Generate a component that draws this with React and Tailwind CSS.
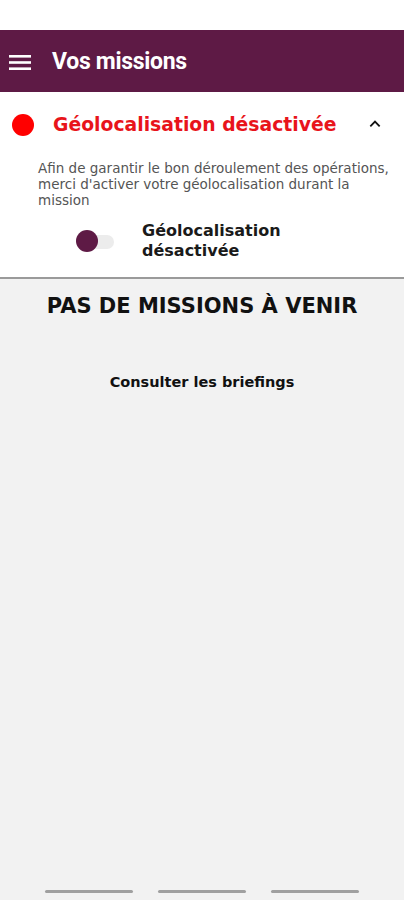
import React, { useState } from "react";

const body = { fontFamily: '"DejaVu Sans", "Open Sans", sans-serif' };

function App() {
    const [expanded, setExpanded] = useState(true);
    const [geoOn, setGeoOn] = useState(false);

    return (
        <div className="w-[404px] h-[900px] flex flex-col bg-[#f2f2f2] overflow-hidden" style={body}>
            {/* status bar */}
            <div className="h-[30px] bg-white shrink-0" />

            {/* app bar */}
            <div className="h-[62px] shrink-0 bg-[#5e1a45] flex items-center pl-[9px] pt-[2px] gap-[21px]">
                <svg width="22" height="15" viewBox="0 0 22 15" className="text-white">
                    <rect x="0" y="0" width="22" height="2.6" fill="currentColor" />
                    <rect x="0" y="6.2" width="22" height="2.6" fill="currentColor" />
                    <rect x="0" y="12.4" width="22" height="2.6" fill="currentColor" />
                </svg>
                <h1
                    className="text-white text-[23px] font-bold tracking-[-0.3px]"
                    style={{ fontFamily: "Roboto, sans-serif" }}
                >
                    Vos missions
                </h1>
            </div>

            {/* geolocation panel */}
            <div className="bg-white shrink-0 border-b-2 border-[#9a9a9a]">
                <button
                    className="w-full h-[66px] flex items-center pl-[12px] pr-[22px]"
                    onClick={() => setExpanded(!expanded)}
                >
                    <span className="w-[22px] h-[22px] rounded-full bg-[#ff0000] shrink-0" />
                    <span className="ml-[19px] text-[#e8141b] text-[18.8px] font-semibold flex-1 text-left">
                        Géolocalisation désactivée
                    </span>
                    <svg width="14" height="14" viewBox="0 0 24 24" className={`-mt-[3px] ${expanded ? "" : "rotate-180"}`}>
                        <path d="M4 16 L12 8 L20 16" fill="none" stroke="#111" strokeWidth="3.2" />
                    </svg>
                </button>

                {expanded && (
                    <div className="pl-[38px] pr-[8px] pb-[16px]">
                        <p className="text-[13.5px] leading-[16px] text-[#555] mt-[2px]">
                            Afin de garantir le bon déroulement des opérations, merci d'activer votre géolocalisation durant la mission
                        </p>
                        <div className="flex items-center mt-[13px]">
                            <button
                                className="relative w-[40px] h-[24px] ml-[36px] shrink-0"
                                onClick={() => setGeoOn(!geoOn)}
                            >
                                <span className="absolute left-[4px] right-[0px] top-[6px] h-[14px] rounded-full bg-[#ececec]" />
                                <span
                                    className={`absolute top-[1px] w-[22px] h-[22px] rounded-full bg-[#5e1a45] ${
                                        geoOn ? "left-[18px]" : "left-[2px]"
                                    }`}
                                />
                            </button>
                            <span className="ml-[28px] text-[16px] leading-[20px] font-semibold text-[#1a1a1a]">
                                Géolocalisation
                                <br />
                                désactivée
                            </span>
                        </div>
                    </div>
                )}
            </div>

            {/* content */}
            <div className="flex-1 flex flex-col items-center">
                <h2 className="mt-[12px] text-[21px] font-bold text-[#111]">
                    PAS DE MISSIONS À VENIR
                </h2>
                <button className="mt-[49px] text-[14.5px] font-semibold text-[#111]">
                    Consulter les briefings
                </button>
            </div>

            {/* bottom tabs */}
            <div className="h-[20px] shrink-0 flex justify-center gap-[25px] pt-[10px]">
                <span className="w-[88px] h-[3px] rounded-full bg-[#a0a0a0]" />
                <span className="w-[88px] h-[3px] rounded-full bg-[#a0a0a0]" />
                <span className="w-[88px] h-[3px] rounded-full bg-[#a0a0a0]" />
            </div>
        </div>
    );
}

export default App;
